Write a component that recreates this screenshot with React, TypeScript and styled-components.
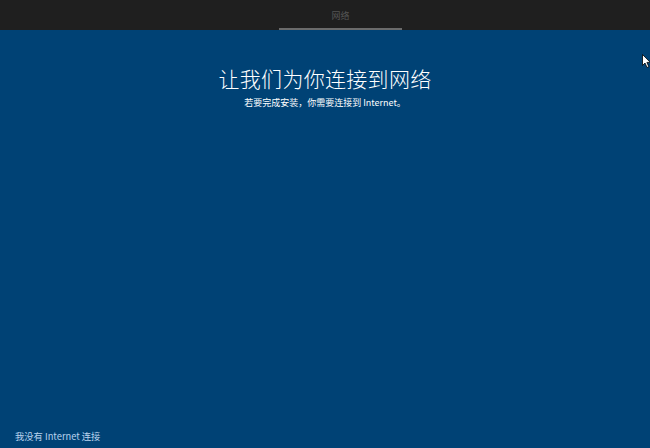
import React from "react";
import styled, { createGlobalStyle } from "styled-components";

const GlobalStyle = createGlobalStyle`
  html, body {
    margin: 0;
    padding: 0;
    height: 100%;
  }
  body {
    font-family: "Noto Sans CJK SC", "Noto Sans", sans-serif;
  }
  #root {
    height: 100%;
  }
`;

const Screen = styled.div`
  position: relative;
  width: 650px;
  height: 448px;
  display: flex;
  flex-direction: column;
  background: #004275;
  overflow: hidden;
`;

const TopBar = styled.div`
  height: 30px;
  background: #1f1f1f;
  display: flex;
  justify-content: center;
  padding-left: 31px;
  box-sizing: border-box;
`;

const Tab = styled.div<{ active?: boolean }>`
  width: 123px;
  display: flex;
  align-items: center;
  justify-content: center;
  font-size: 9px;
  color: #555555;
  border-bottom: 2px solid ${(p) => (p.active ? "#6b6b6b" : "transparent")};
  box-sizing: border-box;
  padding-top: 2px;
`;

const Content = styled.main`
  flex: 1;
  display: flex;
  flex-direction: column;
  align-items: center;
  padding-top: 34px;
`;

const Title = styled.h1`
  margin: 0;
  font-weight: 300;
  font-size: 21px;
  line-height: 28px;
  color: #ffffff;
  letter-spacing: 0.3px;
`;

const Subtitle = styled.p`
  margin: 4px 0 0;
  font-size: 9px;
  line-height: 13px;
  color: #ffffff;
`;

const Footer = styled.div`
  padding: 0 0 3px 15px;
`;

const OfflineLink = styled.a`
  font-size: 9.3px;
  line-height: 13px;
  color: #b9d3ee;
  text-decoration: none;
  cursor: pointer;
`;

const Cursor = styled.svg`
  position: absolute;
  left: 642px;
  top: 54px;
`;

export default function App() {
  return (
    <>
      <GlobalStyle />
      <Screen>
        <TopBar>
          <Tab active>网络</Tab>
        </TopBar>
        <Content>
          <Title>让我们为你连接到网络</Title>
          <Subtitle>若要完成安装，你需要连接到 Internet。</Subtitle>
        </Content>
        <Footer>
          <OfflineLink>我没有 Internet 连接</OfflineLink>
        </Footer>
        <Cursor width="10" height="15" viewBox="0 0 10 15">
          <path
            d="M0.5 0.5 L0.5 11.5 L3 9 L5 13.5 L6.8 12.7 L4.9 8.4 L8.3 8.4 Z"
            fill="#ffffff"
            stroke="#000000"
            strokeWidth="0.8"
          />
        </Cursor>
      </Screen>
    </>
  );
}
